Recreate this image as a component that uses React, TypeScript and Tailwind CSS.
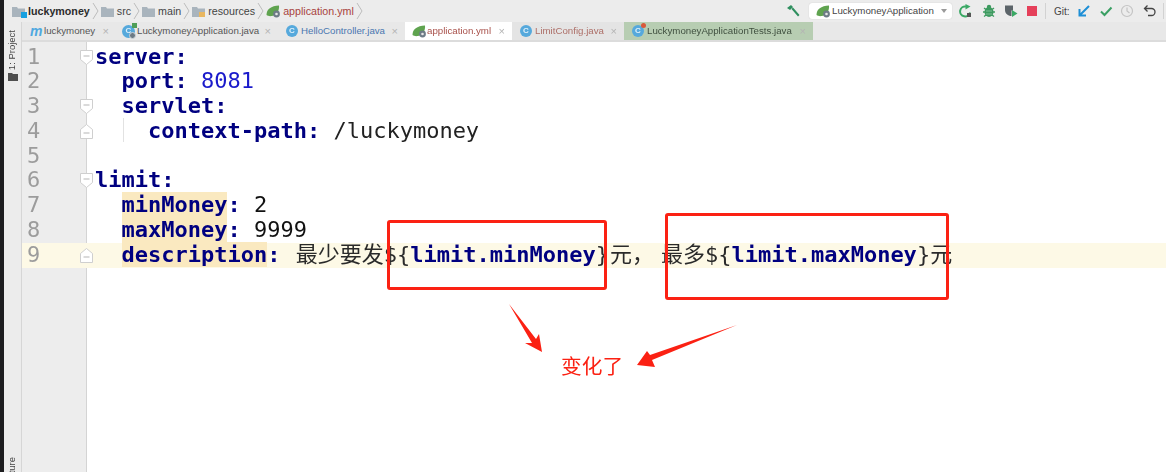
import React from 'react';

const Folder = ({ className = 'fill-[#a9b4bd]' }: { className?: string }) => (
  <svg width="13" height="11" viewBox="0 0 13 11" className="shrink-0">
    <path d="M0 1h5l1 1.500h7V11H0z" className={className} />
  </svg>
);

const Chevron = () => (
  <svg width="7" height="18" viewBox="0 0 7 18" className="shrink-0 mx-[2px]">
    <path d="M1 1l5 8-5 8" fill="none" stroke="#bdbdbd" strokeWidth="1" />
  </svg>
);

const Spring = () => (
  <svg width="15" height="14" viewBox="0 0 15 14" className="shrink-0">
    <path d="M0.500 11C0.500 5 5 2 13 1.500c.5 5-2 9.500-7 10.500-2.500.4-4 0-5.500-1z" fill="#5fa34f" />
    <circle cx="10.500" cy="10" r="3.400" fill="#6d7b86" />
    <circle cx="10.500" cy="10" r="1.300" fill="#e6e6e6" />
  </svg>
);

const ClassIcon = ({ badge }: { badge?: boolean }) => (
  <span className="relative flex items-center justify-center w-[12px] h-[12px] rounded-full bg-[#56a9dc] text-[8px] font-bold text-[#dff0fa] shrink-0 leading-none">
    C
    {badge && <span className="absolute -top-[2px] -right-[2px] w-[5px] h-[5px] rounded-full bg-[#d9583b]" />}
  </span>
);

const AppIcon = () => (
  <span className="relative flex items-center justify-center w-[13px] h-[13px] rounded-full bg-[#56a9dc] text-[8px] font-bold text-[#dff0fa] shrink-0 leading-none">
    C
    <span className="absolute -top-[2px] -right-[2px] w-[5px] h-[5px] bg-[#4f9e57]" />
    <span className="absolute -bottom-[1px] -right-[1px] w-[7px] h-[7px] rounded-full bg-[#6d7b86] border border-[#cfd6da]" />
  </span>
);

const tabs = [
  { name: 'luckymoney', width: 'w-[94px] pl-[8px]', gap: 'mr-0', bg: 'bg-[#e8e8e8]', text: 'text-[#555555]', icon: <span className="font-['Liberation_Sans',sans-serif] italic font-bold text-[14px] leading-none text-[#4fa8e0] w-[14px]">m</span> },
  { name: 'LuckymoneyApplication.java', width: 'w-[162px] pl-[6px]', gap: 'mr-[2px]', bg: 'bg-[#e8e8e8]', text: 'text-[#555555]', icon: <AppIcon /> },
  { name: 'HelloController.java', width: 'w-[127px] pl-[8px]', gap: 'mr-[3px]', bg: 'bg-[#e8e8e8]', text: 'text-[#4a77b0]', icon: <ClassIcon /> },
  { name: 'application.yml', width: 'w-[107px] pl-[7px]', gap: 'mr-0', bg: 'bg-white', text: 'text-[#a8504a]', icon: <Spring /> },
  { name: 'LimitConfig.java', width: 'w-[112px] pl-[8px]', gap: 'mr-[3px]', bg: 'bg-[#e4e4e4]', text: 'text-[#ad6f68]', icon: <ClassIcon /> },
  { name: 'LuckymoneyApplicationTests.java', width: 'w-[189px] pl-[8px]', gap: 'mr-[3px]', bg: 'bg-[#b7cdb2]', text: 'text-[#3f4f3f]', icon: <ClassIcon badge /> },
];

const FoldMark = ({ up }: { up?: boolean }) => (
  <svg width="13" height="15" viewBox="0 0 13 15" className="absolute left-[-7px] top-[5px]">
    <path
      d={up ? 'M0.500 14.500V5.500L6.500 0.500l6 5v9z' : 'M0.500 0.500h12v9l-6 5-6-5z'}
      fill="#ffffff"
      stroke="#cfcfcf"
    />
    <path d={up ? 'M3.500 9h6' : 'M3.500 6h6'} stroke="#b5b5b5" />
  </svg>
);

const Key = ({ children }: { children: React.ReactNode }) => <span className="font-bold text-[#000080]">{children}</span>;
const Tag = ({ children }: { children: React.ReactNode }) => <span className="font-bold text-[#000080] bg-[#fae9c0]">{children}</span>;

const code: { fold?: 'down' | 'up'; active?: boolean; content: React.ReactNode }[] = [
  { fold: 'down', content: <Key>server:</Key> },
  { content: <>  <Key>port:</Key> <span className="text-[#1a1acb]">8081</span></> },
  { fold: 'down', content: <>  <Key>servlet:</Key></> },
  { fold: 'up', content: <>    <Key>context-path:</Key> <span className="text-[#222222]">/luckymoney</span></> },
  { content: '' },
  { fold: 'down', content: <Key>limit:</Key> },
  { content: <>  <Tag>minMoney</Tag><Key>:</Key> <span className="text-[#111111]">2</span></> },
  { content: <>  <Tag>maxMoney</Tag><Key>:</Key> <span className="text-[#111111]">9999</span></> },
  {
    fold: 'up',
    active: true,
    content: (
      <>
        {'  '}<Tag>description</Tag><Key>:</Key>{' '}
        <span className="text-[#2a2a2a] ml-[2px]">最少要发{'${'}</span><Key>limit.minMoney</Key>
        <span className="text-[#2a2a2a]">{'}'}<span className="ml-[1px]">元</span><span className="inline-block w-[29px]">，</span>最多{'${'}</span><Key>limit.maxMoney</Key>
        <span className="text-[#2a2a2a]">{'}'}元</span>
      </>
    ),
  },
];

export default function App() {
  return (
    <div className="relative w-[1166px] h-[472px] overflow-hidden flex bg-white font-['Liberation_Sans',sans-serif]">
      <div className="w-[4px] bg-[#1d1d1f] shrink-0" />
      <div className="flex-1 flex flex-col min-w-0 blur-[0.5px]">
        {/* breadcrumb + run toolbar */}
        <div className="h-[22px] shrink-0 bg-[#ececec] flex items-center justify-between text-[10.7px] text-[#444444]">
          <div className="flex items-center pl-[8px]">
            <span className="relative mr-[2px]">
              <Folder />
              <span className="absolute right-[-2px] bottom-[-1px] w-[6px] h-[6px] bg-[#18a0e0]" />
            </span>
            <span className="font-bold text-[#2b2b2b] ml-[1px]">luckymoney</span>
            <Chevron />
            <Folder />
            <span className="ml-[3px]">src</span>
            <Chevron />
            <Folder />
            <span className="ml-[3px]">main</span>
            <Chevron />
            <span className="relative">
              <Folder />
              <span className="absolute right-0 bottom-0 w-[6px] h-[5px] bg-[#e8b660]" />
            </span>
            <span className="ml-[3px]">resources</span>
            <Chevron />
            <Spring />
            <span className="ml-[2px] text-[#a8433d]">application.yml</span>
            <Chevron />
          </div>
          <div className="flex items-center h-full">
            <svg width="14" height="14" viewBox="0 0 14 14" className="mr-[9px]">
              <path d="M1 4l4-3 2 2-3 3zM5.500 5L7 3.500 13.500 11 12 12.500z" fill="#2f8f5f" />
            </svg>
            <div className="w-[143px] h-[16px] bg-white rounded-[3px] shadow-[0_0_1px_#bbbbbb] flex items-center pl-[7px] pr-[5px] text-[9.7px] text-[#444444]">
              <Spring />
              <span className="ml-[1px] flex-1">LuckymoneyApplication</span>
              <span className="w-0 h-0 border-x-[3px] border-x-transparent border-t-[4px] border-t-[#9a9a9a]" />
            </div>
            <svg width="14" height="14" viewBox="0 0 14 14" className="ml-[7px]">
              <path d="M11 8.500A5 5 0 1 1 7 2.500" fill="none" stroke="#3aa864" strokeWidth="2" />
              <path d="M6.500 0l5 2.500-5 3z" fill="#3aa864" />
              <rect x="8" y="9" width="4" height="4" fill="#555555" />
            </svg>
            <svg width="14" height="14" viewBox="0 0 14 14" className="ml-[9px]">
              <ellipse cx="7" cy="8" rx="4.500" ry="5" fill="#3d9a5f" />
              <circle cx="7" cy="3" r="2.200" fill="#3d9a5f" />
              <path d="M2 4l2 1.500M12 4l-2 1.500M1 8h2M13 8h-2M2 12.500l2-1.500M12 12.500l-2-1.500" stroke="#3d9a5f" strokeWidth="1.300" />
              <path d="M4 7h6M4 10h6" stroke="#8fc7a3" strokeWidth="0.800" />
            </svg>
            <svg width="14" height="14" viewBox="0 0 14 14" className="ml-[8px]">
              <path d="M1 1.500h8v5l-1.500 0v5.500C4 12 1 9.500 1 6z" fill="#5c6469" />
              <path d="M8 6l5.500 3.500L8 13z" fill="#3aa864" />
            </svg>
            <div className="w-[10px] h-[10px] bg-[#e5405a] ml-[9px]" />
            <div className="w-px h-[16px] bg-[#d2d2d2] ml-[8px]" />
            <span className="ml-[8px] text-[10px] text-[#444444] w-[18px]">Git:</span>
            <svg width="14" height="14" viewBox="0 0 14 14" className="ml-[5px]">
              <path d="M12 2L3.500 10.500M2.500 5v6.500H9" fill="none" stroke="#1e8fd6" strokeWidth="2" />
            </svg>
            <svg width="14" height="14" viewBox="0 0 14 14" className="ml-[8px]">
              <path d="M2 7.500l3.500 3.500L12.500 3.500" fill="none" stroke="#3a9f63" strokeWidth="2" />
            </svg>
            <svg width="14" height="14" viewBox="0 0 14 14" className="ml-[7px]">
              <circle cx="7" cy="7" r="5.500" fill="none" stroke="#c4c4c4" strokeWidth="1.200" />
              <path d="M7 3.500V7l2.500 2" fill="none" stroke="#c4c4c4" strokeWidth="1.200" />
            </svg>
            <svg width="14" height="14" viewBox="0 0 14 14" className="ml-[9px]">
              <path d="M4.500 1.500L1.500 4.500l3 3M2 4.500h6.500a3.500 3.500 0 0 1 0 7H5" fill="none" stroke="#444444" strokeWidth="1.300" />
            </svg>
            <div className="w-px h-[16px] bg-[#d2d2d2] ml-[6px] mr-[2px]" />
          </div>
        </div>

        <div className="flex-1 flex min-h-0">
          {/* tool window rail */}
          <div className="w-[18px] shrink-0 bg-[#ececec] border-r border-[#d6d6d6] flex flex-col items-center overflow-hidden text-[9.5px] text-[#444444]">
            <span className="mt-[8px] [writing-mode:vertical-rl] rotate-180">1: Project</span>
            <svg width="10" height="8" viewBox="0 0 10 8" className="mt-[3px]">
              <path d="M0 0h4l1 1h5v7H0z" fill="#4f4f4f" />
            </svg>
            <span className="mt-auto mb-[-24px] shrink-0 [writing-mode:vertical-rl] rotate-180">Structure</span>
          </div>

          <div className="flex-1 flex flex-col min-w-0">
            {/* tabs */}
            <div className="h-[18px] shrink-0 flex bg-[#e8e8e8]">
              {tabs.map(tab => (
                <div key={tab.name} className={`${tab.width} ${tab.bg} flex items-center pr-[7px] text-[9.7px] ${tab.text}`}>
                  <span className={`${tab.gap} flex items-center`}>{tab.icon}</span>
                  <span className="flex-1 whitespace-nowrap">{tab.name}</span>
                  <span className="text-[11px] leading-none text-[#b4b4b4]">×</span>
                </div>
              ))}
            </div>
            <div className="h-[2px] shrink-0 bg-[#dcdcdc]" />

            {/* editor */}
            <div className="flex-1 relative flex flex-col font-['DejaVu_Sans_Mono','Noto_Sans_CJK_SC',monospace] text-[22px]">
              <div className="absolute inset-y-0 left-0 w-[65px] bg-[#ededed] border-r border-[#d4d4d4]" />
              <div className="h-[2.5px] shrink-0" />
              {code.map((line, i) => (
                <div key={i} className={`relative h-[24.8px] shrink-0 flex items-center ${line.active ? 'bg-[#fdf9e6]' : ''}`}>
                  <div className="w-[66px] h-full relative shrink-0 text-[#9c9c9c] leading-[24.8px] pl-[5px]">
                    {i + 1}
                    {line.fold && (
                      <span className="absolute left-[65px] top-0">
                        <FoldMark up={line.fold === 'up'} />
                      </span>
                    )}
                  </div>
                  <div className="pl-[7px] whitespace-pre leading-[24.8px]">{line.content}</div>
                </div>
              ))}
              <div className="absolute left-[101px] top-[76px] w-px h-[24px] bg-[#e2e2e2]" />
            </div>
          </div>
        </div>
      </div>

      {/* red annotations */}
      <div className="absolute left-[387px] top-[220px] w-[220px] h-[70px] border-[3px] border-[#fb2113] rounded-[3px]" />
      <div className="absolute left-[665px] top-[213px] w-[284px] h-[87px] border-[3px] border-[#fb2113] rounded-[3px]" />
      <svg className="absolute left-0 top-0 pointer-events-none" width="1166" height="472" viewBox="0 0 1166 472">
        <path d="M509 304L536 339L539 334L542 352L525 343L532 343z" fill="#fb2113" />
        <path d="M737 325L650 355L647 351L637 365L655 367L652 360z" fill="#fb2113" />
      </svg>
      <span className="absolute left-[561px] top-[351px] text-[20.7px] leading-[28px] text-[#fb2113] font-['Noto_Sans_CJK_SC',sans-serif]">变化了</span>
    </div>
  );
}
